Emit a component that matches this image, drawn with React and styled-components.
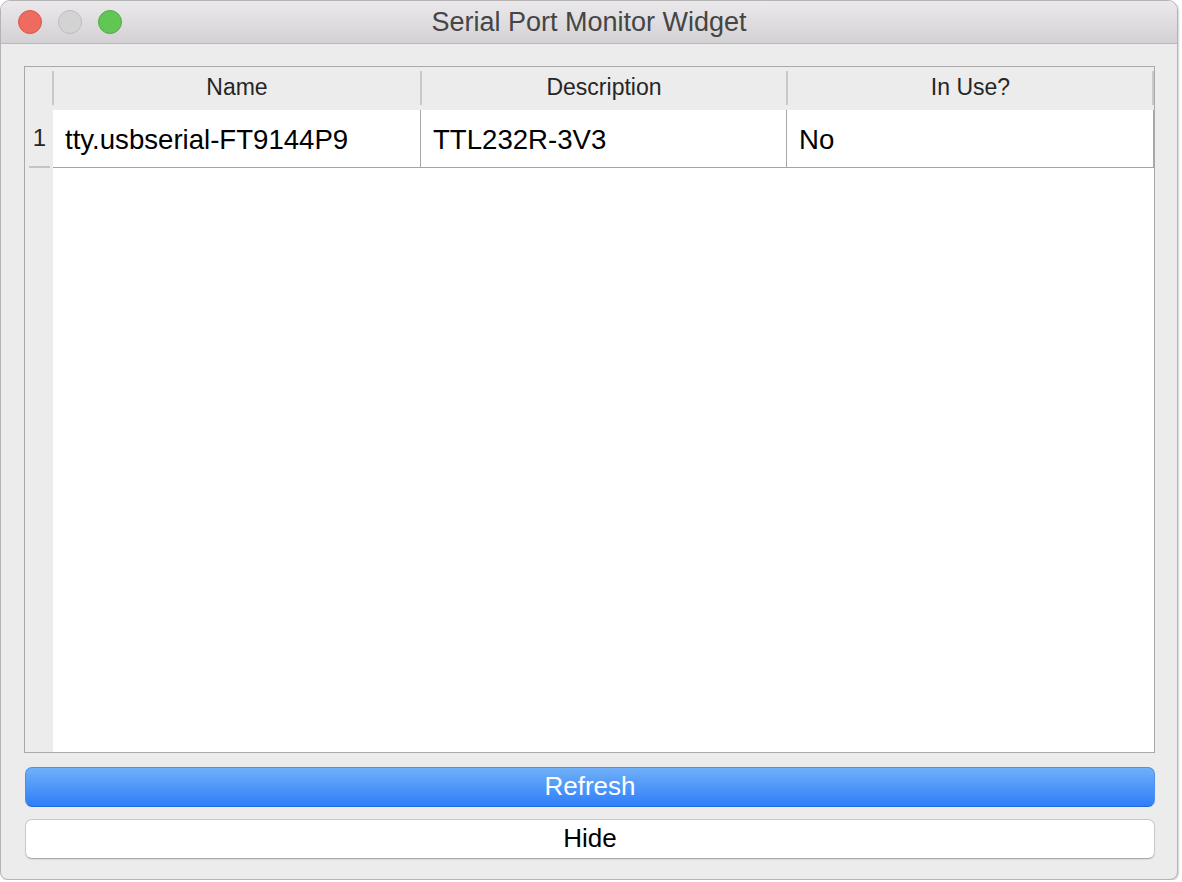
import React from "react";
import styled, { createGlobalStyle } from "styled-components";

const Global = createGlobalStyle`
  html, body { margin: 0; padding: 0; background: #ffffff; }
  body { font-family: "Liberation Sans", Arial, Helvetica, sans-serif; }
  * { box-sizing: border-box; }
`;

const Window = styled.div`
  width: 1178px;
  height: 880px;
  border: 1px solid #b4b4b4;
  border-radius: 10px 10px 8px 8px;
  background: #ececec;
  box-shadow: 1px 1px 2px rgba(0, 0, 0, 0.18);
  overflow: hidden;
  display: flex;
  flex-direction: column;
`;

const TitleBar = styled.div`
  height: 43px;
  flex: none;
  border-bottom: 1px solid #b9b9b9;
  background: linear-gradient(#ebe9eb, #d3d1d3);
  display: grid;
  grid-template-columns: 1fr auto 1fr;
  align-items: center;
`;

const Lights = styled.div`
  display: flex;
  gap: 16px;
  padding-left: 17px;
`;

const Light = styled.span`
  width: 24px;
  height: 24px;
  border-radius: 50%;
  background: ${(p) => p.$fill};
  border: 1px solid ${(p) => p.$edge};
`;

const Title = styled.div`
  font-size: 27px;
  color: #454545;
  line-height: 1;
  padding-top: 1px;
`;

const Body = styled.div`
  flex: 1;
  display: flex;
  flex-direction: column;
  padding: 22px 22px 20px 23px;
`;

const Table = styled.div`
  flex: 1;
  border: 1px solid #a9a9a9;
  display: grid;
  grid-template-columns: 28px 1101px;
  grid-template-rows: 43px 58px 1fr;
  background: #ececec;
`;

const Corner = styled.div`
  background: #ececec;
`;

const HeaderRow = styled.div`
  display: grid;
  grid-template-columns: 368px 366px 367px;
  background: #ececec;
`;

const HeaderCell = styled.div`
  position: relative;
  display: flex;
  align-items: center;
  justify-content: center;
  font-size: 23px;
  color: #262626;
  padding-bottom: 3px;
  &::before {
    content: "";
    position: absolute;
    left: -1px;
    top: 4px;
    bottom: 5px;
    width: 2px;
    background: #c8c8c8;
  }
  ${(p) =>
    p.$last &&
    `&::after {
      content: "";
      position: absolute;
      right: 0px;
      top: 4px;
      bottom: 5px;
      width: 2px;
      background: #c8c8c8;
    }`}
`;

const RowHeader = styled.div`
  position: relative;
  display: flex;
  align-items: center;
  justify-content: center;
  font-size: 24px;
  color: #262626;
  padding: 0 0 2px 1px;
  &::after {
    content: "";
    position: absolute;
    left: 4px;
    right: 3px;
    bottom: 0px;
    height: 2px;
    background: #c4c4c4;
  }
`;

const DataRow = styled.div`
  display: grid;
  grid-template-columns: 368px 366px 367px;
  background: #ffffff;
`;

const Cell = styled.div`
  display: flex;
  align-items: center;
  padding-left: 12px;
  font-size: 27.6px;
  color: #000000;
  border-right: 1px solid #a6a6a6;
  border-bottom: 1px solid #a6a6a6;
  padding-top: 2px;
`;

const Gutter = styled.div`
  background: #ececec;
`;

const Blank = styled.div`
  background: #ffffff;
`;

const Buttons = styled.div`
  display: flex;
  flex-direction: column;
  gap: 12px;
  padding: 14px 0 0 1px;
`;

const Button = styled.button`
  height: 40px;
  width: 100%;
  border-radius: 7px;
  font-family: "Liberation Sans", Arial, Helvetica, sans-serif;
  font-size: 26px;
  padding: 0 0 1px;
  cursor: default;
  ${(p) =>
    p.$primary
      ? `
    color: #ffffff;
    background: linear-gradient(#70b0f9, #2e7ef8);
    border: 1px solid #4c8ff0;
    border-bottom-color: #2468e0;
  `
      : `
    color: #000000;
    background: #ffffff;
    border: 1px solid #c9c9c9;
    border-bottom-color: #acacac;
    box-shadow: 0 1px 1px rgba(0,0,0,0.08);
  `}
`;

const columns = ["Name", "Description", "In Use?"];
const rows = [["tty.usbserial-FT9144P9", "TTL232R-3V3", "No"]];

export default function App() {
  return (
    <>
      <Global />
      <Window>
        <TitleBar>
          <Lights>
            <Light $fill="#ee6b60" $edge="#d6574d" />
            <Light $fill="#d3d3d3" $edge="#bdbdbd" />
            <Light $fill="#62c655" $edge="#51ab45" />
          </Lights>
          <Title>Serial Port Monitor Widget</Title>
          <div />
        </TitleBar>
        <Body>
          <Table>
            <Corner />
            <HeaderRow>
              {columns.map((c, i) => (
                <HeaderCell key={c} $last={i === columns.length - 1}>
                  {c}
                </HeaderCell>
              ))}
            </HeaderRow>
            {rows.map((r, i) => (
              <React.Fragment key={i}>
                <RowHeader>{i + 1}</RowHeader>
                <DataRow>
                  {r.map((v, j) => (
                    <Cell key={j}>{v}</Cell>
                  ))}
                </DataRow>
              </React.Fragment>
            ))}
            <Gutter />
            <Blank />
          </Table>
          <Buttons>
            <Button $primary>Refresh</Button>
            <Button>Hide</Button>
          </Buttons>
        </Body>
      </Window>
    </>
  );
}
